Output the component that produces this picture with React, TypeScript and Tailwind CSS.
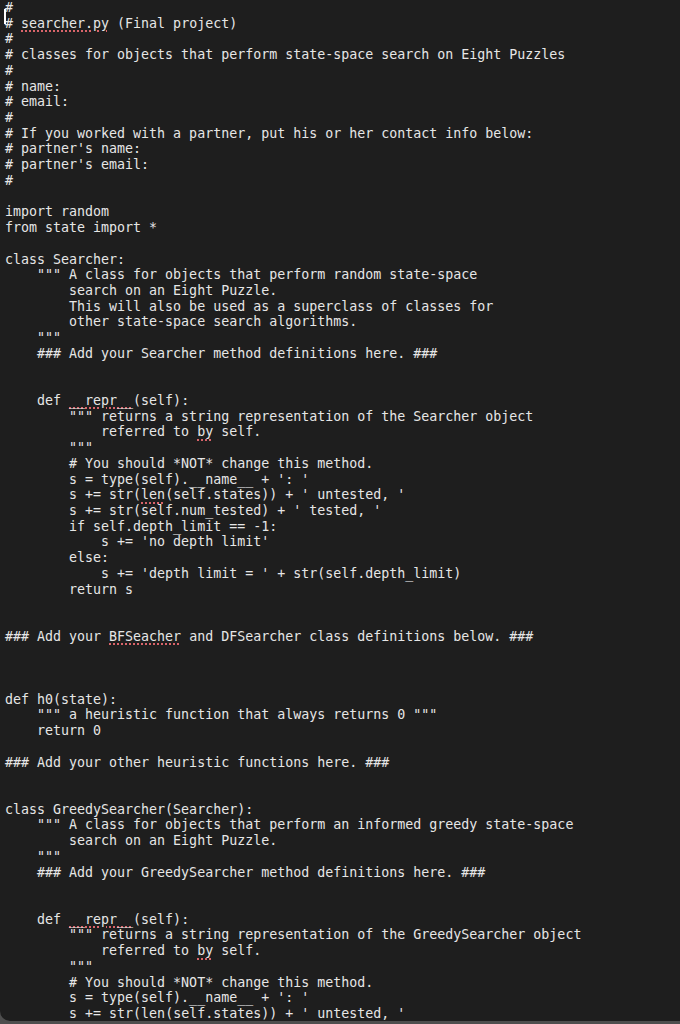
const lines: string[] = [
  "#",
  "# ~searcher.py~ (Final project)",
  "#",
  "# classes for objects that perform state-space search on Eight Puzzles",
  "#",
  "# name:",
  "# email:",
  "#",
  "# If you worked with a partner, put his or her contact info below:",
  "# partner's name:",
  "# partner's email:",
  "#",
  "",
  "import random",
  "from state import *",
  "",
  "class Searcher:",
  '    """ A class for objects that perform random state-space',
  "        search on an Eight Puzzle.",
  "        This will also be used as a superclass of classes for",
  "        other state-space search algorithms.",
  '    """',
  "    ### Add your Searcher method definitions here. ###",
  "",
  "",
  "    def ~__repr__~(self):",
  '        """ returns a string representation of the Searcher object',
  "            referred to ~by~ self.",
  '        """',
  "        # You should *NOT* change this method.",
  "        s = type(self).__name__ + ': '",
  "        s += str(~len~(self.states)) + ' untested, '",
  "        s += str(self.num_tested) + ' tested, '",
  "        if self.depth_limit == -1:",
  "            s += 'no depth limit'",
  "        else:",
  "            s += 'depth limit = ' + str(self.depth_limit)",
  "        return s",
  "",
  "",
  "### Add your ~BFSeacher~ and DFSearcher class definitions below. ###",
  "",
  "",
  "",
  "def h0(state):",
  '    """ a heuristic function that always returns 0 """',
  "    return 0",
  "",
  "### Add your other heuristic functions here. ###",
  "",
  "",
  "class GreedySearcher(Searcher):",
  '    """ A class for objects that perform an informed greedy state-space',
  "        search on an Eight Puzzle.",
  '    """',
  "    ### Add your GreedySearcher method definitions here. ###",
  "",
  "",
  "    def ~__repr__~(self):",
  '        """ returns a string representation of the GreedySearcher object',
  "            referred to ~by~ self.",
  '        """',
  "        # You should *NOT* change this method.",
  "        s = type(self).__name__ + ': '",
  "        s += str(~len~(self.states)) + ' untested, '",
  "        s += str(self.num_tested) + ' tested, '",
];

// misspelled words are wrapped in ~ ~ and get the dotted red underline
const CodeLine = ({ text, first }: { text: string; first?: boolean }) => {
  const parts = text.split("~");
  return (
    <div className="h-[15.72px] whitespace-pre">
      {first && (
        <span className="relative inline-block w-0">
          <span className="absolute left-[-1px] top-[-3px] h-[15px] w-[2px] bg-white" />
        </span>
      )}
      {parts.map((p, i) =>
        i % 2 === 1 ? (
          <span
            key={i}
            className="underline decoration-dotted decoration-[#d9646a] decoration-[2px] underline-offset-[3px]"
          >
            {p}
          </span>
        ) : (
          <span key={i}>{p}</span>
        )
      )}
    </div>
  );
};

const App = () => {
  return (
    <div className="w-[680px] h-[1024px] bg-[#4e4e4e] overflow-hidden">
      <div className="h-[1021px] bg-[#1e1e1e] rounded-bl-[10px] overflow-hidden">
        <div className="pl-[5px] font-['DejaVu_Sans_Mono',monospace] text-[13.3px] leading-[15.72px] text-[#e6e6e6]">
          {lines.map((l, i) => (
            <CodeLine key={i} text={l} first={i === 0} />
          ))}
        </div>
      </div>
    </div>
  );
};

export default App;
